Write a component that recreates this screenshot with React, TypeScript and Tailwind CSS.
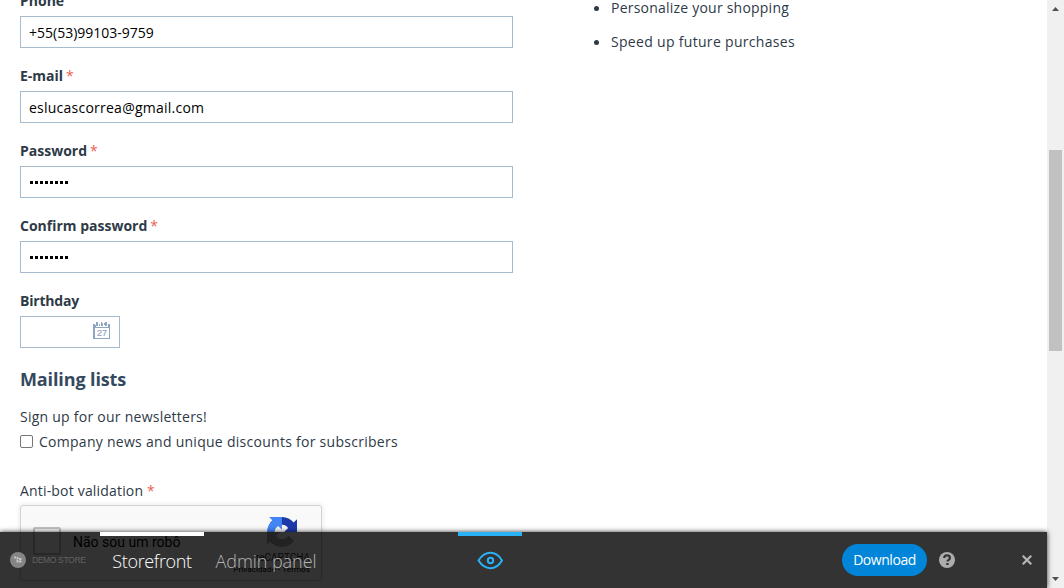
import React from "react";

function Field({ label, required, labelClass, children }: { label: string; required?: boolean; labelClass?: string; children: React.ReactNode }) {
  return (
    <div className="mb-[18px]">
      <label className={`mb-[5px] block h-5 whitespace-nowrap text-[14px] font-bold leading-5 ${labelClass ?? ""}`}>
        {label}
        {required && <span className="ml-[3px] font-normal text-[#ea6153]">*</span>}
      </label>
      {children}
    </div>
  );
}

function TextBox({ children }: { children: React.ReactNode }) {
  return (
    <div className="flex h-8 w-[493px] items-center border border-[#a7bbce] bg-white px-2 text-[14px] text-black">
      {children}
    </div>
  );
}

function Dots() {
  return (
    <div className="mt-px ml-px flex gap-[2px]">
      {Array.from({ length: 8 }, (_, i) => (
        <span key={i} className="size-[3px] bg-black" />
      ))}
    </div>
  );
}

function CalendarIcon() {
  return (
    <svg width="17" height="18" viewBox="0 0 17 18" fill="#8fa6c2">
      <path shapeRendering="crispEdges" d="M0 2h2v15H0zM16 2h1v15h-1zM0 16h17v1H0zM0 5h17v1H0zM3 0h2v4H3zM8 0h1v4H8zM12 0h2v4h-2zM6 2h1v2H6zM9 1h1v3H9zM11 1h1v2h-1zM2 3h1v2H2zM15 2h1v3h-1z" />
      <text x="4" y="14" fontFamily="Liberation Sans" fontSize="9" textLength="10" stroke="#8fa6c2" strokeWidth="0.200">27</text>
    </svg>
  );
}

function RecaptchaLogo() {
  return (
    <svg width="30" height="30" viewBox="0 0 64 64">
      <path d="M64 31.955l-.033-1.370V4.687l-7.160 7.160C50.948 4.674 42.033.093 32.050.093c-10.400 0-19.622 4.960-25.458 12.640l11.736 11.860a15.550 15.550 0 0 1 4.754-5.334c2.050-1.600 4.952-2.906 8.968-2.906.485 0 .860.057 1.135.163 4.976.393 9.288 3.140 11.828 7.124l-8.307 8.307L64 31.953" fill="#1c3aa9" />
      <path d="M31.862.094l-1.370.033H4.594l7.160 7.160C4.580 13.147 0 22.060 0 32.046c0 10.400 4.960 19.622 12.640 25.458L24.500 45.768a15.550 15.550 0 0 1-5.334-4.754c-1.600-2.050-2.906-4.952-2.906-8.968 0-.485.057-.860.163-1.135.393-4.976 3.140-9.288 7.124-11.828l8.307 8.307L31.860.095" fill="#4285f4" />
      <path d="M.001 32.045l.033 1.370v25.898l7.160-7.160c5.860 7.173 14.774 11.754 24.760 11.754 10.400 0 19.622-4.960 25.458-12.640l-11.736-11.860a15.550 15.550 0 0 1-4.754 5.334c-2.050 1.600-4.952 2.906-8.968 2.906-.485 0-.860-.057-1.135-.163-4.976-.393-9.288-3.140-11.828-7.124l8.307-8.307L0 32.045" fill="#ababab" />
    </svg>
  );
}

function Captcha() {
  return (
    <div className="mt-1 flex h-[76px] w-[302px] rounded-[3px] border border-[#d3d3d3] bg-[#f9f9f9] shadow-[0_0_4px_1px_rgba(0,0,0,0.08)]">
      <span className="ml-3 mt-[21px] size-7 shrink-0 rounded-[2px] border-2 border-[#c1c1c1] bg-[#fcfcfc]" />
      <span className="ml-3 mt-[26px] w-[159px] shrink-0 whitespace-nowrap font-['Roboto'] text-[14px] leading-5 text-black">Não sou um robô</span>
      <div className="flex w-[78px] shrink-0 flex-col items-end pt-[11px] font-['Roboto'] text-[#333]">
        <div className="h-[31px] pr-[13px]"><RecaptchaLogo /></div>
        <span className="mt-0.5 text-[10px] leading-[15px]">reCAPTCHA</span>
        <span className="whitespace-nowrap text-[8px] leading-[9px] tracking-[0.1px] text-black">Privacidade - Termos</span>
      </div>
    </div>
  );
}

function DemoBar() {
  return (
    <footer className="absolute bottom-0 left-0 flex h-14 w-[1047px] bg-[rgba(0,0,0,0.8)] shadow-[0_0_5px_rgba(0,0,0,0.8)]">
      <div className="flex w-[100px] items-center pl-[10px]">
        <svg width="16" height="16" viewBox="0 0 16 16">
          <circle cx="8" cy="8" r="8" fill="#858585" />
          <path d="M4 4.500h2v2H4zM6.500 5h2v2h-2zM6.500 7.500h2v3h-2zM9 6h2.500v2H9zM9 8.500h2.500v2H9z" fill="#c5c5c5" />
        </svg>
        <span className="ml-[6px] whitespace-nowrap font-['Liberation_Sans'] text-[8.500px] tracking-[-0.350px] text-[#626262]">DEMO STORE</span>
      </div>
      <div className="w-[104px] border-t-4 border-white text-center">
        <span className="block whitespace-nowrap text-[18px] font-light leading-[51px] tracking-[-0.350px] text-white">Storefront</span>
      </div>
      <div className="w-[124px] pt-1 text-center">
        <span className="block whitespace-nowrap text-[18px] font-light leading-[51px] tracking-[-0.050px] text-[#b5b5b5]">Admin panel</span>
      </div>
      <div className="ml-[130px] flex w-16 justify-center border-t-4 border-[#29b2f5] pt-[15px]">
        <svg width="26" height="19" viewBox="0 0 26 19" fill="none" stroke="#29b2f5" strokeWidth="2">
          <path d="M1.500 9.500C8 -.7 19 -.7 25 9.500C19 19.700 8 19.700 1.500 9.500Z" strokeLinejoin="round" />
          <circle cx="13.500" cy="9.500" r="2.700" />
        </svg>
      </div>
      <button className="ml-[320px] mt-3 h-8 w-[85px] rounded-full bg-[#0085d9] text-[14px] leading-8 tracking-[-0.450px] text-white">Download</button>
      <svg className="ml-3 mt-5" width="16" height="16" viewBox="0 0 16 16">
        <circle cx="8" cy="8" r="8" fill="#adadad" />
        <path d="M5.200 6c.1-3.400 5.700-3.400 5.700 0 0 1.900-2.400 1.800-2.400 3.600" fill="none" stroke="#333" strokeWidth="2.200" />
        <path d="M7.300 11h2.300v2H7.300z" fill="#333" />
      </svg>
      <svg className="ml-[67px] mt-[23px]" width="10" height="10" viewBox="0 0 10 10" stroke="#b5b5b5" strokeWidth="2.200">
        <path d="M.7.7l8.600 8.600M9.300.7L.7 9.300" />
      </svg>
    </footer>
  );
}

export default function App() {
  return (
    <div className="relative flex h-[588px] w-[1064px] overflow-hidden bg-white font-['Open_Sans',sans-serif] text-[#2e3a47]">
      <main className="-mt-[9px] w-[590px] pl-5">
        <Field label="Phone"><TextBox>+55(53)99103-9759</TextBox></Field>
        <Field label="E-mail" required><TextBox><span className="tracking-[0.240px]">eslucascorrea@gmail.com</span></TextBox></Field>
        <Field label="Password" required><TextBox><Dots /></TextBox></Field>
        <Field label="Confirm password" required><TextBox><Dots /></TextBox></Field>
        <Field label="Birthday" labelClass="tracking-[-0.200px]">
          <div className="flex h-8 w-[100px] justify-end border border-[#a7bbce] pr-[9px] pt-[5px]"><CalendarIcon /></div>
        </Field>
        <h2 className="-mt-px h-7 text-[18px] font-bold leading-7 tracking-[-0.120px] text-[#34495e]">Mailing lists</h2>
        <p className="mt-[14px] h-5 text-[14px] leading-5 tracking-[0.250px]">Sign up for our newsletters!</p>
        <div className="mt-[5px] flex h-5 items-center">
          <span className="-mt-px size-[13px] rounded-[2px] border border-[#767676] bg-white" />
          <span className="ml-[6px] whitespace-nowrap text-[14px] leading-5 tracking-[0.275px]">Company news and unique discounts for subscribers</span>
        </div>
        <p className="mt-[29px] h-5 text-[14px] leading-5 tracking-[0.180px]">Anti-bot validation <span className="text-[#ea6153]">*</span></p>
        <Captcha />
      </main>
      <ul className="-mt-[2px] w-[457px] text-[14px] leading-5">
        <li className="mb-[14px] flex items-center tracking-[0.220px]"><span className="ml-1 mr-3 size-[5px] rounded-full bg-[#2e3a47]" />Personalize your shopping</li>
        <li className="flex items-center tracking-[0.310px]"><span className="ml-1 mr-3 size-[5px] rounded-full bg-[#2e3a47]" />Speed up future purchases</li>
      </ul>
      <aside className="flex w-[17px] flex-col items-center bg-[#f0f0f0]">
        <svg className="mt-[7px]" width="7" height="4" viewBox="0 0 7 4" fill="#505050"><path d="M0 4L3.500 0 7 4z" /></svg>
        <span className="mt-[139px] h-[201px] w-[13px] bg-[#c1c1c1]" />
        <svg className="mt-[226px]" width="7" height="4" viewBox="0 0 7 4" fill="#505050"><path d="M0 0h7L3.500 4z" /></svg>
      </aside>
      <DemoBar />
    </div>
  );
}
